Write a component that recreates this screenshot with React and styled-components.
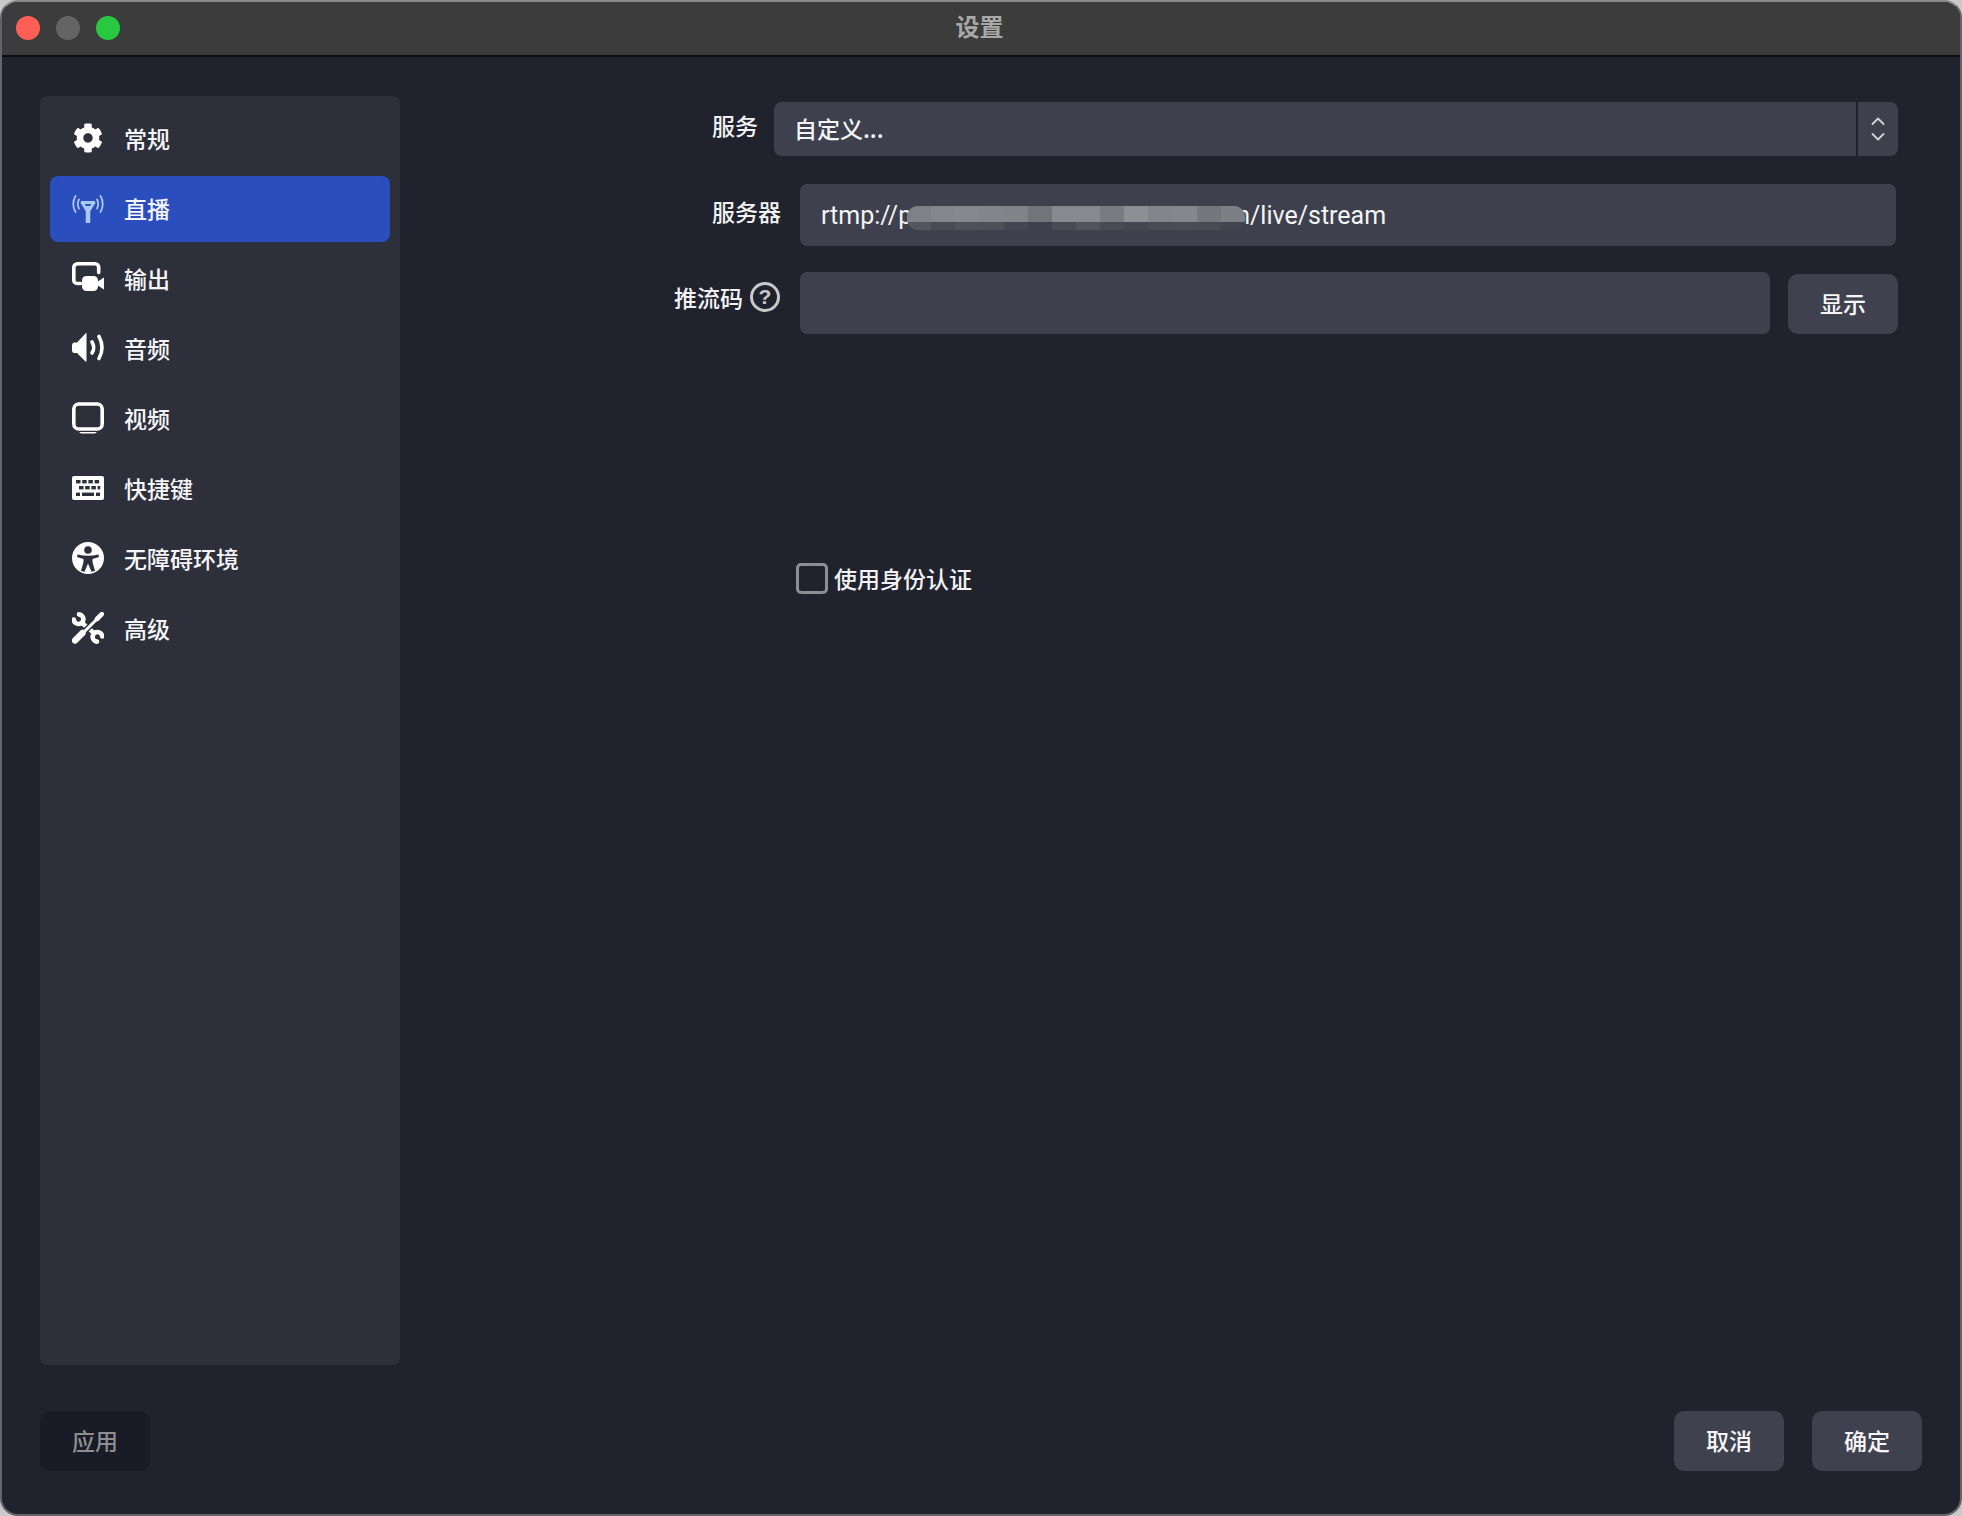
import React from "react";
import styled, { createGlobalStyle } from "styled-components";
import { FaCog } from "react-icons/fa";

const Global = createGlobalStyle`
  html, body { margin: 0; padding: 0; background: #c9c9c9; }
  #root { width: 1962px; height: 1516px; }
  * { box-sizing: border-box; }
`;

const FONT = `"Noto Sans CJK SC", "Noto Sans", sans-serif`;

const Win = styled.div`
  width: 1962px;
  height: 1516px;
  display: flex;
  flex-direction: column;
  background: #20232d;
  border: 2px solid #64656b;
  border-top-color: #8a8a8a;
  border-radius: 18px;
  overflow: hidden;
  font-family: ${FONT};
  color: #fff;
`;
const TitleBar = styled.div`
  position: relative;
  height: 55px;
  flex: none;
  display: flex;
  align-items: center;
  justify-content: center;
  padding-bottom: 6px;
  padding-right: 3px;
  background: #3c3c3c;
  border-bottom: 2px solid #0c0c0e;
  color: #a8a8a8;
  font-size: 24px;
  font-weight: 700;
`;
const Lights = styled.div`
  position: absolute;
  left: 14px;
  top: 14px;
  display: flex;
  gap: 16px;
`;
const Light = styled.span`
  width: 24px;
  height: 24px;
  border-radius: 50%;
  background: ${(p) => p.$c};
`;
const Body = styled.div`
  flex: 1;
  min-height: 0;
  display: flex;
  flex-direction: column;
  padding: 39px 38px 43px 38px;
`;
const Main = styled.div`
  flex: 1;
  min-height: 0;
  display: flex;
`;
const Sidebar = styled.nav`
  width: 360px;
  flex: none;
  display: flex;
  flex-direction: column;
  gap: 4px;
  padding: 10px;
  background: #2d2f3b;
  border-radius: 7px;
`;
const NavItem = styled.div`
  height: 66px;
  display: flex;
  align-items: center;
  gap: 20px;
  padding-left: 22px;
  padding-bottom: 2px;
  border-radius: 8px;
  background: ${(p) => (p.$active ? "#2a4ebe" : "transparent")};
  font-size: 23px;
  font-weight: 500;
  color: #f6f6f8;
`;
const IconBox = styled.span`
  width: 32px;
  height: 32px;
  display: flex;
  align-items: center;
  justify-content: center;
  flex: none;
  color: #fff;
  svg { display: block; }
`;
const Form = styled.div`
  flex: 1;
  padding-top: 6px;
  padding-right: 24px;
  display: flex;
  flex-direction: column;
`;
const Row = styled.div`
  display: flex;
  align-items: center;
  justify-content: flex-end;
  margin-bottom: ${(p) => p.$mb || 0}px;
`;
const Label = styled.label`
  display: flex;
  align-items: center;
  gap: 7px;
  font-size: 23px;
  font-weight: 500;
  color: #f2f2f4;
  margin-right: ${(p) => p.$mr}px;
  padding-bottom: ${(p) => p.$pb}px;
`;
const Select = styled.div`
  width: 1124px;
  height: 54px;
  display: flex;
  background: #3e414d;
  border-radius: 8px;
  overflow: hidden;
`;
const SelectValue = styled.div`
  flex: 1;
  display: flex;
  align-items: center;
  padding-left: 20px;
  padding-bottom: 3px;
  font-size: 23px;
  font-weight: 500;
  color: #f4f4f6;
`;
const SelectArrow = styled.div`
  width: 42px;
  border-left: 2px solid #20232d;
  display: flex;
  align-items: center;
  justify-content: center;
`;
const Input = styled.div`
  position: relative;
  width: ${(p) => p.$w}px;
  height: 62px;
  display: flex;
  align-items: center;
  padding-left: 21px;
  background: #3e414d;
  border-radius: 7px;
  font-family: "Roboto", "Noto Sans", sans-serif;
  font-size: 25px;
  color: #f4f4f6;
  white-space: pre;
`;
const Tail = styled.span`
  margin-left: ${(p) => p.$ml}px;
`;
const BlurBox = styled.div`
  position: absolute;
  left: 107px;
  top: 22px;
  width: 338px;
  height: 24px;
  display: flex;
  border-radius: 11px;
  overflow: hidden;
`;
const BlurCell = styled.span`
  flex: 1;
  background: linear-gradient(
    to bottom,
    rgb(${(p) => p.$t}) 0,
    rgb(${(p) => p.$t}) 16px,
    rgb(${(p) => p.$b}) 16px,
    rgb(${(p) => p.$b}) 100%
  );
`;
const Help = styled.span`
  width: 30px;
  height: 30px;
  flex: none;
  border-radius: 50%;
  border: 3px solid #c8c8ca;
  display: flex;
  align-items: center;
  justify-content: center;
  font-size: 21px;
  font-weight: 700;
  color: #c8c8ca;
  font-family: "Liberation Sans", sans-serif;
`;
const Button = styled.button`
  width: 110px;
  height: 60px;
  border: 0;
  padding: 0 0 2px;
  border-radius: 10px;
  background: ${(p) => (p.$disabled ? "#191b26" : "#3f424e")};
  color: ${(p) => (p.$disabled ? "#8e8e90" : "#f6f6f8")};
  font-family: ${FONT};
  font-size: 23px;
  font-weight: 500;
`;
const ShowButton = styled(Button)`
  margin-left: 18px;
  align-self: flex-end;
`;
const Spacer = styled.span`
  width: 2px;
`;
const CheckRow = styled.div`
  display: flex;
  align-items: center;
  gap: 6px;
  margin: 227px 0 0 396px;
  font-size: 23px;
  font-weight: 500;
  color: #f2f2f4;
`;
const Box = styled.span`
  width: 32px;
  height: 31px;
  border: 3px solid #8d8e93;
  border-radius: 5px;
`;
const Footer = styled.div`
  flex: none;
  margin-top: 46px;
  display: flex;
  justify-content: space-between;
`;
const FooterRight = styled.div`
  display: flex;
  gap: 28px;
`;

const Antenna = () => (
  <svg width="32" height="32" viewBox="0 0 32 32" fill="none" stroke="#a9c8f2">
    <path d="M3.5 4 Q-1 12 3.5 20M7 7.5 Q4.5 12 7 16.5M28.5 4 Q33 12 28.5 20M25 7.5 Q27.5 12 25 16.5" strokeWidth="1.8" strokeLinecap="round" />
    <path d="M10 10.5 H22 L16 20Z" strokeWidth="3" strokeLinejoin="round" />
    <path d="M16 14 V31" strokeWidth="4.6" />
  </svg>
);
const Output = () => (
  <svg width="32" height="32" viewBox="0 0 32 32">
    <path d="M8.5 21.5 H5 A3.2 3.2 0 0 1 1.8 18.3 V5.5 A3.7 3.7 0 0 1 5.5 1.8 H23 A3.7 3.7 0 0 1 26.7 5.5 V10.5" fill="none" stroke="#fff" strokeWidth="3.6" strokeLinecap="round" />
    <rect x="10" y="14" width="16" height="15" rx="4.5" fill="#fff" />
    <path d="M25 20 L32 15.5 V27.5 L25 23Z" fill="#fff" />
  </svg>
);
const Speaker = () => (
  <svg width="32" height="32" viewBox="0 0 32 32" fill="none" stroke="#fff">
    <path d="M0 13 Q0 11 2 10.5 H5 L13.5 1.5 Q14.5 0.5 14.5 2 V28.5 Q14.5 30.5 13 29 L5 21 H2 Q0 20.5 0 18.5Z" fill="#fff" stroke="none" />
    <path d="M20 10 Q23.5 15.5 20 21" strokeWidth="3.6" strokeLinecap="round" />
    <path d="M27 4.5 Q33 15.5 27 26.5" strokeWidth="3.6" strokeLinecap="round" />
  </svg>
);
const Monitor = () => (
  <svg width="32" height="32" viewBox="0 0 32 32">
    <rect x="1.8" y="2" width="28.4" height="25" rx="5" fill="none" stroke="#fff" strokeWidth="3.6" />
    <path d="M7 30 H25 L23 31.5 H9Z" fill="#fff" />
  </svg>
);
const Keyboard = () => (
  <svg width="32" height="24" viewBox="0 0 32 24">
    <rect width="32" height="24" rx="2" fill="#fff" />
    <g fill="#2d2f3b">
      <rect x="4" y="4" width="4.5" height="3.4" /><rect x="10.2" y="4" width="4.5" height="3.4" /><rect x="16.4" y="4" width="4.5" height="3.4" /><rect x="22.6" y="4" width="4.5" height="3.4" />
      <rect x="7" y="10" width="4.5" height="3.4" /><rect x="13.2" y="10" width="4.5" height="3.4" /><rect x="19.4" y="10" width="4.5" height="3.4" /><rect x="25.6" y="10" width="2.6" height="3.4" />
      <rect x="4" y="16.6" width="4" height="3.4" /><rect x="10" y="16.6" width="12" height="3.4" /><rect x="24" y="16.6" width="4" height="3.4" />
    </g>
  </svg>
);
const Access = () => (
  <svg width="32" height="32" viewBox="0 0 32 32">
    <circle cx="16" cy="16" r="16" fill="#fff" />
    <circle cx="16" cy="8" r="3.8" fill="#2d2f3b" />
    <path d="M5.5 12.5 Q16 15 26.5 12.5 L27 15 L20.5 17 V20 L23 29 L19.5 29.8 L16 21.5 L12.5 29.8 L9 29 L11.5 20 V17 L5 15Z" fill="#2d2f3b" />
  </svg>
);
const Tools = () => (
  <svg width="32" height="32" viewBox="0 0 32 32" fill="none" strokeLinecap="round">
    <path d="M1.8 7.6 A4.8 4.8 0 1 0 7 2.4" stroke="#fff" strokeWidth="4.6" />
    <path d="M30.2 24.4 A4.8 4.8 0 1 0 25 29.6" stroke="#fff" strokeWidth="4.6" />
    <path d="M10 11 L22 21" stroke="#fff" strokeWidth="4.4" strokeLinecap="butt" />
    <path d="M6 26 L26 6" stroke="#2d2f3b" strokeWidth="6" strokeLinecap="butt" />
    <path d="M3 28.5 L10.5 21" stroke="#fff" strokeWidth="6.4" />
    <path d="M10 22 L26 6" stroke="#fff" strokeWidth="3" />
    <path d="M25 7 L29.8 2.2" stroke="#fff" strokeWidth="4.6" />
  </svg>
);
const Chevrons = () => (
  <svg width="16" height="30" viewBox="0 0 16 30" fill="none" stroke="#d4d4d8" strokeWidth="1.8" strokeLinecap="round" strokeLinejoin="round">
    <path d="M2.5 10 L8 4.5 L13.5 10" />
    <path d="M2.5 20 L8 25.5 L13.5 20" />
  </svg>
);

const mosaic = [
  ["128,129,134", "84,86,94"], ["133,134,139", "72,74,84"], ["135,136,141", "78,80,90"], ["132,133,138", "78,80,88"],
  ["130,131,136", "68,70,84"], ["115,116,122", "62,64,78"], ["136,137,142", "72,74,84"], ["136,137,142", "82,84,92"],
  ["122,123,129", "72,74,84"], ["142,143,148", "68,70,82"], ["132,133,138", "72,74,84"], ["134,135,140", "74,76,86"],
  ["118,119,125", "72,74,84"], ["126,127,133", "66,68,80"],
];

const nav = [
  ["常规", <FaCog size={30} />],
  ["直播", <Antenna />],
  ["输出", <Output />],
  ["音频", <Speaker />],
  ["视频", <Monitor />],
  ["快捷键", <Keyboard />],
  ["无障碍环境", <Access />],
  ["高级", <Tools />],
];

export default function App() {
  return (
    <>
      <Global />
      <Win>
        <TitleBar>
          <Lights>
            <Light $c="#ff5f57" />
            <Light $c="#646464" />
            <Light $c="#28c840" />
          </Lights>
          设置
        </TitleBar>
        <Body>
          <Main>
            <Sidebar>
              {nav.map(([t, icon], i) => (
                <NavItem key={t} $active={i === 1}>
                  <IconBox>{icon}</IconBox>
                  {t}
                </NavItem>
              ))}
            </Sidebar>
            <Form>
              <Row $mb={28}>
                <Label $mr={16} $pb={8}>服务</Label>
                <Select>
                  <SelectValue>自定义...</SelectValue>
                  <SelectArrow><Chevrons /></SelectArrow>
                </Select>
              </Row>
              <Row $mb={26}>
                <Label $mr={19} $pb={8}>服务器</Label>
                <Input $w={1096}>
                  rtmp://p
                  <BlurBox>
                    {mosaic.map(([t, b], i) => <BlurCell key={i} $t={t} $b={b} />)}
                  </BlurBox>
                  <Tail $ml={324}>n/live/stream</Tail>
                </Input>
                <Spacer />
              </Row>
              <Row>
                <Label $mr={20} $pb={12}>推流码<Help>?</Help></Label>
                <Input $w={970} />
                <ShowButton>显示</ShowButton>
              </Row>
              <CheckRow><Box />使用身份认证</CheckRow>
            </Form>
          </Main>
          <Footer>
            <Button $disabled>应用</Button>
            <FooterRight>
              <Button>取消</Button>
              <Button>确定</Button>
            </FooterRight>
          </Footer>
        </Body>
      </Win>
    </>
  );
}
